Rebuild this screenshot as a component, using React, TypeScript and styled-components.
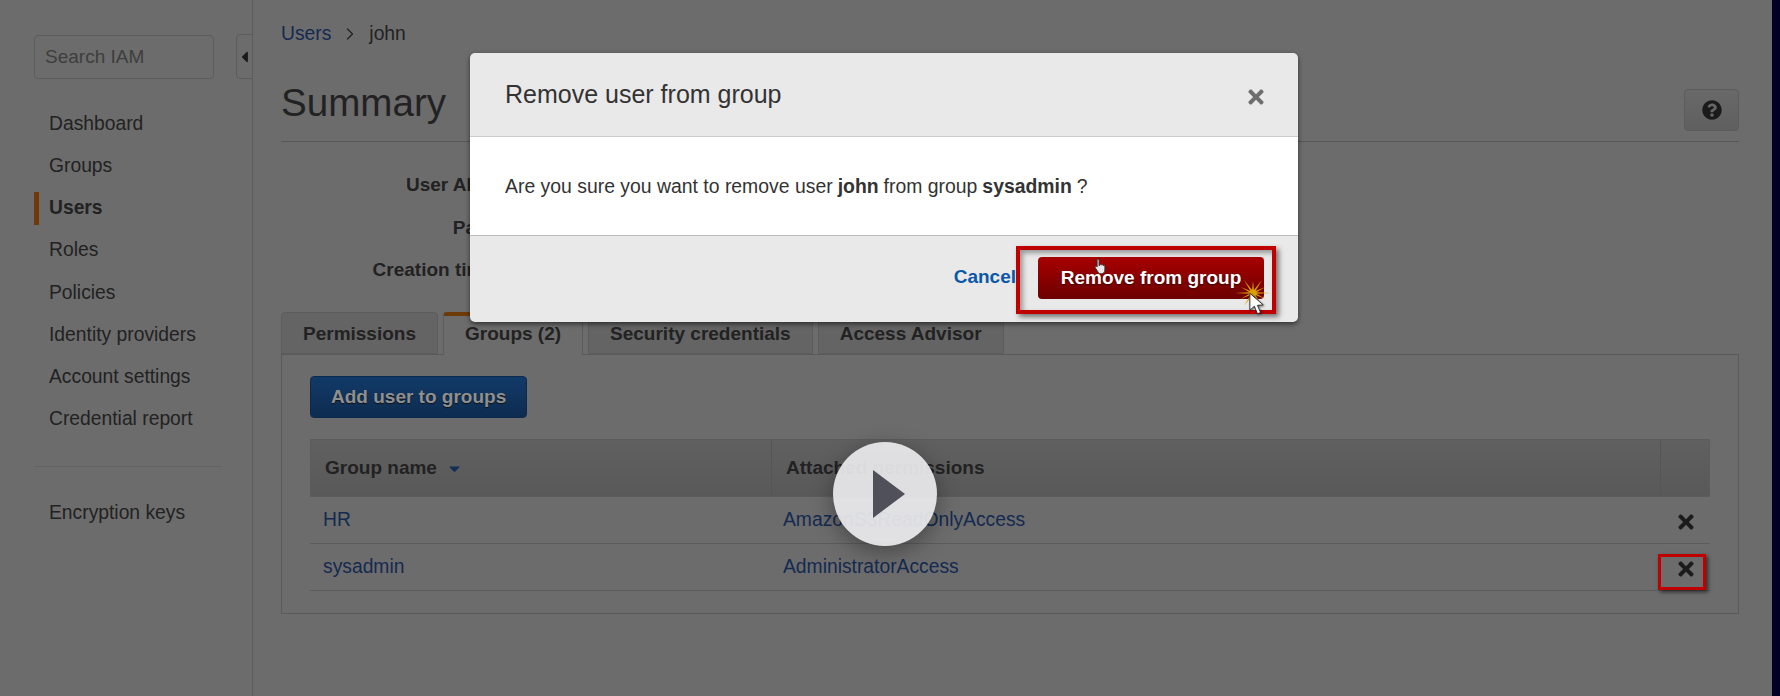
import styled, { createGlobalStyle } from 'styled-components';
import { ChevronRight } from 'lucide-react';
import { FaCaretDown, FaCaretLeft, FaQuestionCircle, FaTimes } from 'react-icons/fa';

const GlobalStyle = createGlobalStyle`
	html, body {
		margin: 0;
		height: 100%;
		overflow: hidden;
		background: #6c6c6c;
		font-family: "Liberation Sans", Arial, sans-serif;
		font-size: 19px;
		color: #222;
	}
	* {
		box-sizing: border-box;
	}
`;

const NAV_ITEMS = ['Dashboard', 'Groups', 'Users', 'Roles', 'Policies', 'Identity providers', 'Account settings', 'Credential report'];
const TABS = ['Permissions', 'Groups (2)', 'Security credentials', 'Access Advisor'];
const SUMMARY_LABELS = ['User ARN', 'Path', 'Creation time'];
const GROUPS = [
	{ name: 'HR', policy: 'AmazonS3ReadOnlyAccess' },
	{ name: 'sysadmin', policy: 'AdministratorAccess' },
];

const LINK_BLUE = '#142a50';
const TAB_ORANGE = '#6e3a0a';
const LINE_GRAY = '#5c5c5c';

const Page = styled.div`
	position: relative;
	display: flex;
	width: 1780px;
	height: 696px;
	overflow: hidden;
`;

const Sidebar = styled.aside`
	position: relative;
	flex: 0 0 253px;
	padding: 35px 0 0 34px;
	border-right: 1px solid ${LINE_GRAY};
	font-size: 19.3px;
`;

const SearchBox = styled.div`
	display: flex;
	align-items: center;
	width: 180px;
	height: 44px;
	padding-left: 10px;
	margin-bottom: 28px;
	border: 1px solid ${LINE_GRAY};
	border-radius: 4px;
	font-size: 19px;
	color: #3e3e3e;
`;

const CollapseHandle = styled.div`
	position: absolute;
	top: 34px;
	right: 0;
	display: flex;
	align-items: center;
	justify-content: flex-end;
	width: 16px;
	height: 45px;
	border: 1px solid ${LINE_GRAY};
	border-right: none;
	border-radius: 5px 0 0 5px;
	font-size: 18px;
	color: #1a1a1a;
`;

const NavList = styled.nav`
	display: flex;
	flex-direction: column;
	gap: 9.25px;
	width: 188px;
`;

const NavItem = styled.div<{ $active?: boolean }>`
	display: flex;
	align-items: center;
	height: 33px;
	padding-left: ${({ $active }) => ($active ? '10px' : '15px')};
	white-space: nowrap;
	font-weight: ${({ $active }) => ($active ? 700 : 400)};
	border-left: ${({ $active }) => ($active ? `5px solid ${TAB_ORANGE}` : 'none')};
`;

const NavDivider = styled.div`
	width: 188px;
	margin: 30px 0;
	border-top: 1px solid #626262;
`;

const Main = styled.main`
	flex: 1;
	padding: 21px 33px 0 28px;
`;

const Breadcrumb = styled.div`
	display: flex;
	align-items: center;
	gap: 9px;
	height: 26px;
	font-size: 19.3px;
	a {
		color: ${LINK_BLUE};
	}
`;

const TitleRow = styled.div`
	display: flex;
	align-items: flex-start;
	justify-content: space-between;
	height: 95px;
	margin-bottom: 22px;
	padding-top: 33px;
	border-bottom: 1px solid #565656;
	h1 {
		margin: 0;
		font-size: 38.6px;
		font-weight: 400;
		line-height: 46px;
	}
`;

const HelpButton = styled.div`
	display: flex;
	align-items: center;
	justify-content: center;
	width: 55px;
	height: 42px;
	margin-top: 9px;
	border: 1px solid ${LINE_GRAY};
	border-radius: 4px;
	background: linear-gradient(#696969, #5f5f5f);
	font-size: 20px;
	color: #1a1a1a;
`;

const SummaryRow = styled.div`
	height: 42.5px;
	width: 213px;
	line-height: 42.5px;
	text-align: right;
	font-weight: 700;
`;

const Tabs = styled.div`
	display: flex;
	gap: 5px;
	margin-top: 20.5px;
`;

const Tab = styled.div<{ $active?: boolean }>`
	position: relative;
	z-index: 1;
	height: ${({ $active }) => ($active ? '43px' : '42px')};
	padding: 0 21px;
	line-height: ${({ $active }) => ($active ? '36px' : '41px')};
	font-weight: 700;
	white-space: nowrap;
	border: 1px solid ${LINE_GRAY};
	border-bottom: ${({ $active }) => ($active ? 'none' : `1px solid ${LINE_GRAY}`)};
	border-top: ${({ $active }) => ($active ? `4px solid ${TAB_ORANGE}` : `1px solid ${LINE_GRAY}`)};
	border-radius: 4px 4px 0 0;
	background: ${({ $active }) => ($active ? '#6c6c6c' : '#646464')};
`;

const Panel = styled.section`
	height: 260px;
	margin-top: -1px;
	padding: 21px 28px 0;
	border: 1px solid #5a5a5a;
`;

const AddButton = styled.div`
	display: inline-flex;
	align-items: center;
	height: 42px;
	padding: 0 20px;
	border-radius: 4px;
	border: 1px solid #0d2a4e;
	background: linear-gradient(#113a68, #0e2c50);
	font-weight: 700;
	color: #8f8f8f;
	text-shadow: 0 1px 1px #121212;
`;

const Table = styled.div`
	margin-top: 21px;
`;

const HeaderRow = styled.div`
	display: grid;
	grid-template-columns: 460px 889px 49px;
	height: 58px;
	border: 1px solid ${LINE_GRAY};
	background: linear-gradient(#606060, #595959);
	font-weight: 700;
`;

const HeaderCell = styled.div`
	display: flex;
	align-items: center;
	gap: 9px;
	padding-left: 14px;
	& + & {
		border-left: 1px solid #555;
	}
	svg {
		color: #122f56;
		font-size: 17px;
	}
`;

const BodyRow = styled.div`
	display: grid;
	grid-template-columns: 460px 889px 49px;
	height: 47px;
	border-bottom: 1px solid ${LINE_GRAY};
	font-size: 19.3px;
	a {
		color: ${LINK_BLUE};
	}
`;

const BodyCell = styled.div`
	display: flex;
	align-items: center;
	padding-left: 13px;
`;

const RemoveCell = styled.div`
	display: flex;
	align-items: center;
	justify-content: center;
	padding: 3px 0 0 5px;
	font-size: 22px;
	color: #1c1c1c;
`;

const RightStrip = styled.div`
	flex: 0 0 12px;
	background: #020024;
`;

const Modal = styled.div`
	position: absolute;
	top: 53px;
	left: 470px;
	z-index: 2;
	width: 828px;
	height: 269px;
	border-radius: 5px;
	background: #e9e9e9;
	box-shadow: 0 2px 5px rgba(0, 0, 0, 0.55);
`;

const ModalHeader = styled.div`
	display: flex;
	align-items: center;
	justify-content: space-between;
	height: 84px;
	padding: 0 31px 0 35px;
	border-bottom: 1px solid #ccc;
	font-size: 25px;
	color: #333;
	svg {
		color: #6e6e6e;
		font-size: 22px;
		margin-top: 4px;
	}
`;

const ModalBody = styled.div`
	display: flex;
	align-items: center;
	height: 99px;
	padding: 1px 0 0 35px;
	background: #fff;
	border-bottom: 1px solid #bbb;
	font-size: 19.4px;
	color: #333;
	b {
		margin: 0 5px;
	}
`;

const ModalFooter = styled.div`
	display: flex;
	align-items: flex-start;
	justify-content: flex-end;
	height: 86px;
	padding: 10px 22px 0 0;
`;

const CancelLink = styled.a`
	margin-top: 20px;
	font-weight: 700;
	color: #0b57a8;
`;

const Highlight = styled.div`
	position: relative;
	height: 68px;
	padding: 7px 8px 0 18px;
	border: 4px solid #c00000;
	box-shadow: 3px 3px 5px rgba(0, 0, 0, 0.5), inset 3px 3px 5px rgba(0, 0, 0, 0.35);
`;

const RemoveButton = styled.div`
	display: flex;
	align-items: center;
	justify-content: center;
	width: 226px;
	height: 42px;
	border-radius: 4px;
	background: linear-gradient(#a80000, #6c0000);
	font-weight: 700;
	color: #fff;
	text-shadow: 0 1px 2px #300;
`;

const HandCursor = styled.svg`
	position: absolute;
	top: 8px;
	left: 74px;
`;

const ClickBurst = styled.svg`
	position: absolute;
	top: 28px;
	left: 215px;
`;

const ArrowCursor = styled.svg`
	position: absolute;
	top: 42px;
	left: 229px;
	filter: drop-shadow(1px 1px 1px rgba(0, 0, 0, 0.5));
`;

const RowHighlight = styled.div`
	position: absolute;
	top: 554px;
	left: 1658px;
	z-index: 3;
	width: 48px;
	height: 36px;
	border: 3px solid #c00000;
	box-shadow: 2px 2px 4px rgba(0, 0, 0, 0.6);
`;

const PlayButton = styled.div`
	position: absolute;
	top: 442px;
	left: 833px;
	z-index: 4;
	display: flex;
	align-items: center;
	justify-content: center;
	width: 104px;
	height: 104px;
	padding-left: 8px;
	border-radius: 50%;
	background: rgba(234, 234, 236, 0.93);
	box-shadow: 0 6px 22px rgba(0, 0, 0, 0.35);
`;

const burstPoints = Array.from({ length: 24 }, (_, i) => {
	const r = i % 2 === 0 ? (i % 4 === 0 ? 25 : 20) : 5;
	const a = (i * Math.PI) / 12;
	return `${25 + r * Math.cos(a)},${25 + r * Math.sin(a)}`;
}).join(' ');

export default function App() {
	return (
		<Page>
			<GlobalStyle />
			<Sidebar>
				<SearchBox>Search IAM</SearchBox>
				<CollapseHandle>
					<FaCaretLeft />
				</CollapseHandle>
				<NavList>
					{NAV_ITEMS.map((item) => (
						<NavItem key={item} $active={item === 'Users'}>
							{item}
						</NavItem>
					))}
				</NavList>
				<NavDivider />
				<NavList>
					<NavItem>Encryption keys</NavItem>
				</NavList>
			</Sidebar>
			<Main>
				<Breadcrumb>
					<a>Users</a>
					<ChevronRight size={20} strokeWidth={1.5} />
					<span>john</span>
				</Breadcrumb>
				<TitleRow>
					<h1>Summary</h1>
					<HelpButton>
						<FaQuestionCircle />
					</HelpButton>
				</TitleRow>
				{SUMMARY_LABELS.map((label) => (
					<SummaryRow key={label}>{label}</SummaryRow>
				))}
				<Tabs>
					{TABS.map((tab) => (
						<Tab key={tab} $active={tab === 'Groups (2)'}>
							{tab}
						</Tab>
					))}
				</Tabs>
				<Panel>
					<AddButton>Add user to groups</AddButton>
					<Table>
						<HeaderRow>
							<HeaderCell>
								Group name <FaCaretDown />
							</HeaderCell>
							<HeaderCell>Attached permissions</HeaderCell>
							<HeaderCell />
						</HeaderRow>
						{GROUPS.map((group) => (
							<BodyRow key={group.name}>
								<BodyCell>
									<a>{group.name}</a>
								</BodyCell>
								<BodyCell>
									<a>{group.policy}</a>
								</BodyCell>
								<RemoveCell>
									<FaTimes />
								</RemoveCell>
							</BodyRow>
						))}
					</Table>
				</Panel>
			</Main>
			<RightStrip />
			<Modal>
				<ModalHeader>
					Remove user from group
					<FaTimes />
				</ModalHeader>
				<ModalBody>
					Are you sure you want to remove user<b>john</b>from group<b>sysadmin</b>?
				</ModalBody>
				<ModalFooter>
					<CancelLink>Cancel</CancelLink>
					<Highlight>
						<RemoveButton>Remove from group</RemoveButton>
						<HandCursor width="14" height="17" viewBox="0 0 18 22">
							<path
								d="M5 1.5c1 0 1.500.7 1.500 1.600V10l1-.4V8.600c.9-.7 2-.4 2.300.4.9-.5 1.900-.2 2.200.7.9-.3 2 .2 2 1.300v4.500c0 2.700-1.600 4.900-4.500 4.900H9c-1.700 0-2.800-.8-3.700-2.100L1.800 13c-.7-1-.2-2 .6-2.200.7-.2 1.200.2 1.600.7V3.100C4 2.200 4.200 1.500 5 1.500z"
								fill="#e8e8e8"
								stroke="#333"
								strokeWidth="1.2"
							/>
						</HandCursor>
						<ClickBurst width="36" height="30" viewBox="0 0 50 50" preserveAspectRatio="none">
							<polygon points={burstPoints} fill="#dba000" />
						</ClickBurst>
						<ArrowCursor width="16" height="24" viewBox="0 0 18 26">
							<path d="M1 1v19l5-4.500 3.500 8.500 3.500-1.500L9.500 14.500 16 14z" fill="#fff" stroke="#222" strokeWidth="1" />
						</ArrowCursor>
					</Highlight>
				</ModalFooter>
			</Modal>
			<RowHighlight />
			<PlayButton>
				<svg width="32" height="48" viewBox="0 0 32 48">
					<polygon points="0,0 32,24 0,48" fill="#50505a" />
				</svg>
			</PlayButton>
		</Page>
	);
}
